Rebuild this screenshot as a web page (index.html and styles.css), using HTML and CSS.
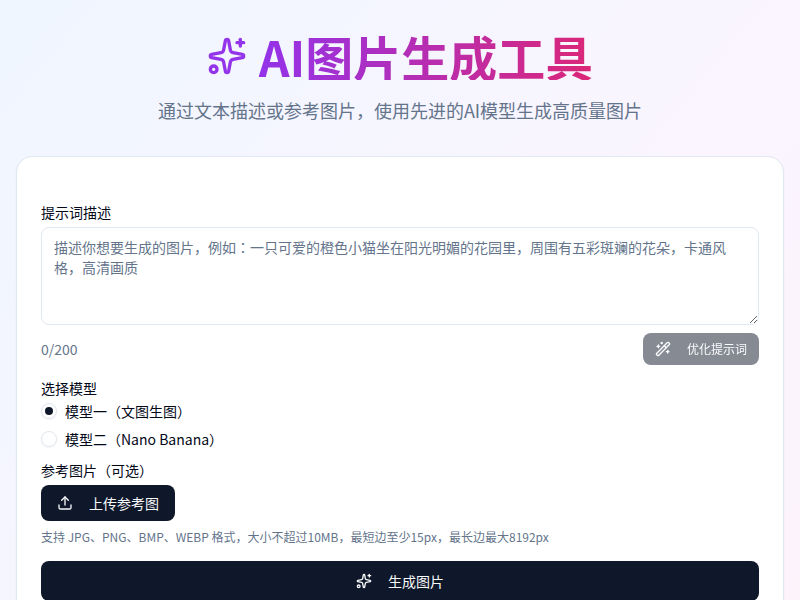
FILE: index.html
```html
<!DOCTYPE html>
<html lang="en">
<head>
  <meta charset="UTF-8" />
  <title>AI图片生成工具</title>
  <link rel="stylesheet" href="styles.css">
</head>
<body>
  <div class="page">
    <header class="header">
      <h1 class="title">
        <svg class="title-icon" viewBox="0 0 24 24" fill="none" stroke="#9333ea" stroke-width="2" stroke-linecap="round" stroke-linejoin="round">
          <path d="M11.017 2.814a1 1 0 0 1 1.966 0l1.051 5.558a2 2 0 0 0 1.594 1.594l5.558 1.051a1 1 0 0 1 0 1.966l-5.558 1.051a2 2 0 0 0-1.594 1.594l-1.051 5.558a1 1 0 0 1-1.966 0l-1.051-5.558a2 2 0 0 0-1.594-1.594l-5.558-1.051a1 1 0 0 1 0-1.966l5.558-1.051a2 2 0 0 0 1.594-1.594z"/>
          <path d="M20 2v4"/><path d="M22 4h-4"/><circle cx="4" cy="20" r="2"/>
        </svg>
        <span class="title-text">AI图片生成工具</span>
      </h1>
      <p class="subtitle">通过文本描述或参考图片，使用先进的AI模型生成高质量图片</p>
    </header>

    <main class="card">
      <div class="field">
        <label class="label" for="prompt">提示词描述</label>
        <textarea id="prompt" class="textarea" placeholder="描述你想要生成的图片，例如：一只可爱的橙色小猫坐在阳光明媚的花园里，周围有五彩斑斓的花朵，卡通风格，高清画质"></textarea>
        <div class="prompt-footer">
          <span class="count">0/200</span>
          <button class="btn btn-small" disabled>
            <svg class="icon" viewBox="0 0 24 24" fill="none" stroke="currentColor" stroke-width="2" stroke-linecap="round" stroke-linejoin="round">
              <path d="m21.64 3.64-1.28-1.28a1.21 1.21 0 0 0-1.72 0L2.36 18.64a1.21 1.21 0 0 0 0 1.72l1.28 1.28a1.2 1.2 0 0 0 1.72 0L21.64 5.36a1.2 1.2 0 0 0 0-1.72"/>
              <path d="m14 7 3 3"/><path d="M5 6v4"/><path d="M19 14v4"/><path d="M10 2v2"/><path d="M7 8H3"/><path d="M21 16h-4"/><path d="M11 3H9"/>
            </svg>
            优化提示词
          </button>
        </div>
      </div>

      <div class="field-models">
        <div class="label">选择模型</div>
        <div class="radio-group">
          <div class="radio-row"><span class="radio checked"></span>模型一（文图生图）</div>
          <div class="radio-row"><span class="radio"></span>模型二（Nano Banana）</div>
        </div>
      </div>

      <div class="field-upload">
        <div class="label">参考图片（可选）</div>
        <button class="btn btn-upload">
          <svg class="icon" viewBox="0 0 24 24" fill="none" stroke="currentColor" stroke-width="2" stroke-linecap="round" stroke-linejoin="round">
            <path d="M21 15v4a2 2 0 0 1-2 2H5a2 2 0 0 1-2-2v-4"/><polyline points="17 8 12 3 7 8"/><line x1="12" y1="3" x2="12" y2="15"/>
          </svg>
          上传参考图
        </button>
        <p class="hint">支持 JPG、PNG、BMP、WEBP 格式，大小不超过10MB，最短边至少15px，最长边最大8192px</p>
      </div>

      <button class="btn btn-generate">
        <svg class="icon" viewBox="0 0 24 24" fill="none" stroke="currentColor" stroke-width="2" stroke-linecap="round" stroke-linejoin="round">
          <path d="M11.017 2.814a1 1 0 0 1 1.966 0l1.051 5.558a2 2 0 0 0 1.594 1.594l5.558 1.051a1 1 0 0 1 0 1.966l-5.558 1.051a2 2 0 0 0-1.594 1.594l-1.051 5.558a1 1 0 0 1-1.966 0l-1.051-5.558a2 2 0 0 0-1.594-1.594l-5.558-1.051a1 1 0 0 1 0-1.966l5.558-1.051a2 2 0 0 0 1.594-1.594z"/>
          <path d="M20 2v4"/><path d="M22 4h-4"/><circle cx="4" cy="20" r="2"/>
        </svg>
        生成图片
      </button>
    </main>
  </div>
</body>
</html>
```

FILE: styles.css
```css
* { margin: 0; padding: 0; box-sizing: border-box; }

html, body {
  font-family: "Noto Sans CJK JP", "Noto Sans", sans-serif;
  font-size: 14px;
  line-height: 20px;
  color: #020817;
}

body {
  min-height: 985px;
  background: linear-gradient(to bottom right, #eff6ff, #faf5ff, #fdf2f8);
}

.page {
  padding: 24px 16px;
}

.header {
  text-align: center;
  margin-bottom: 32px;
}

.title {
  display: flex;
  justify-content: center;
  align-items: center;
  gap: 12px;
  font-size: 48px;
  line-height: 48px;
  font-weight: 700;
  margin-bottom: 16px;
  padding-top: 8px;
}

.title-icon {
  width: 40px;
  height: 40px;
}

.title-text {
  background: linear-gradient(90deg, #9333ea, #db2777);
  -webkit-background-clip: text;
  background-clip: text;
  color: transparent;
}

.subtitle {
  font-size: 18px;
  line-height: 28px;
  color: #64748b;
}

.card {
  background: #fff;
  border: 1px solid #e2e8f0;
  border-radius: 16px;
  padding: 48px 24px 24px;
  box-shadow: 0 1px 2px rgba(0, 0, 0, 0.05);
}

.label {
  display: block;
  font-size: 14px;
  line-height: 14px;
}

.textarea {
  display: block;
  width: 100%;
  height: 98px;
  margin-top: 8px;
  padding: 9px 12px;
  border: 1px solid #e2e8f0;
  border-radius: 8px;
  font-family: inherit;
  font-size: 14px;
  line-height: 20px;
  background: #fff;
  outline: none;
}

.textarea::placeholder {
  color: #64748b;
  opacity: 1;
}

.prompt-footer {
  display: flex;
  justify-content: space-between;
  align-items: center;
  margin-top: 8px;
}

.count {
  color: #64748b;
}

.btn {
  display: inline-flex;
  align-items: center;
  justify-content: center;
  border: none;
  font-family: inherit;
  font-size: 14px;
  line-height: 20px;
  color: #f8fafc;
  background: #0f172a;
  border-radius: 8px;
}

.icon {
  width: 16px;
  height: 16px;
  flex-shrink: 0;
}

.btn-small {
  height: 32px;
  gap: 16px;
  padding: 0 12px;
  font-size: 12px;
  line-height: 16px;
  opacity: 0.5;
}

.field-models {
  margin-top: 16px;
}

.radio-group {
  display: flex;
  flex-direction: column;
  gap: 8px;
  margin-top: 6px;
}

.radio-row {
  display: flex;
  align-items: center;
  gap: 8px;
  height: 20px;
}

.radio {
  position: relative;
  width: 16px;
  height: 16px;
  border: 1px solid #e2e8f0;
  border-radius: 50%;
  background: #fff;
  box-shadow: 0 1px 2px rgba(0, 0, 0, 0.05);
}

.radio.checked::after {
  content: "";
  position: absolute;
  top: 3px;
  left: 3px;
  width: 8px;
  height: 8px;
  border-radius: 50%;
  background: #0f172a;
}

.field-upload {
  margin-top: 14px;
}

.btn-upload {
  height: 36px;
  gap: 16px;
  padding: 0 16px;
  margin-top: 8px;
}

.hint {
  margin-top: 8px;
  font-size: 12px;
  line-height: 16px;
  color: #64748b;
}

.btn-generate {
  width: 100%;
  height: 40px;
  gap: 16px;
  margin-top: 16px;
}
```
